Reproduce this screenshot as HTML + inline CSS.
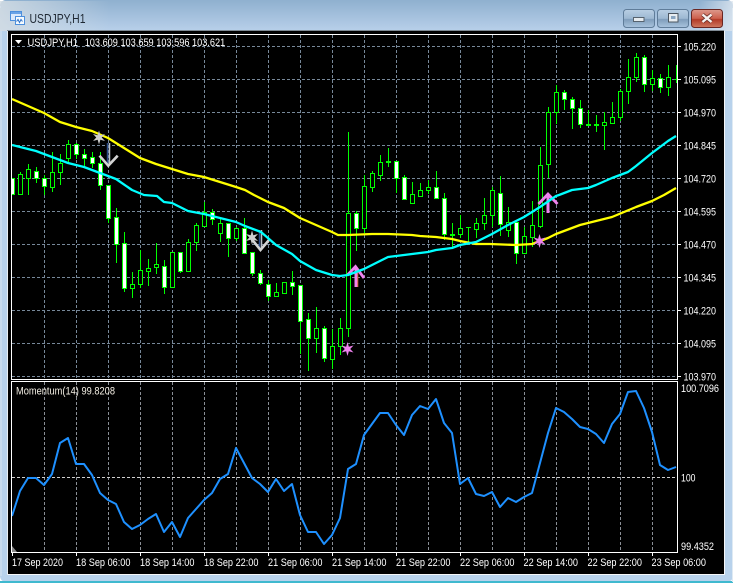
<!DOCTYPE html>
<html><head><meta charset="utf-8"><title>USDJPY,H1</title>
<style>html,body{margin:0;padding:0;background:#fff;width:735px;height:583px;overflow:hidden}svg{display:block}text{font-family:"Liberation Sans",sans-serif}</style></head>
<body>
<svg xmlns="http://www.w3.org/2000/svg" width="735" height="583" viewBox="0 0 735 583">
<defs>
<linearGradient id="tb" x1="0" y1="0" x2="0" y2="1"><stop offset="0" stop-color="#8fb0cf"/><stop offset="1" stop-color="#b8d0ea"/></linearGradient>
<linearGradient id="tl" x1="0" y1="0" x2="1" y2="0"><stop offset="0" stop-color="#d4dde4" stop-opacity=".85"/><stop offset="1" stop-color="#d4dde4" stop-opacity="0"/></linearGradient>
<linearGradient id="tr" x1="0" y1="0" x2="1" y2="0"><stop offset="0" stop-color="#e0e8f0" stop-opacity="0"/><stop offset="1" stop-color="#e0e8f0" stop-opacity=".8"/></linearGradient>
<linearGradient id="btn" x1="0" y1="0" x2="0" y2="1"><stop offset="0" stop-color="#b9cfe4"/><stop offset=".5" stop-color="#9db8d2"/><stop offset=".55" stop-color="#7f9dbb"/><stop offset="1" stop-color="#a9c4de"/></linearGradient>
<linearGradient id="cls" x1="0" y1="0" x2="0" y2="1"><stop offset="0" stop-color="#dd9a8d"/><stop offset=".5" stop-color="#cc5f4c"/><stop offset=".55" stop-color="#b23a27"/><stop offset="1" stop-color="#cf7a62"/></linearGradient>
<clipPath id="cm"><rect x="12" y="35" width="665" height="344"/></clipPath>
<clipPath id="ci"><rect x="12" y="382" width="665" height="170"/></clipPath>
</defs>

<rect x="0" y="0" width="733" height="582" rx="6" fill="#b8d2ec"/>
<path d="M6 0H727a6 6 0 0 1 6 6V31H0V6A6 6 0 0 1 6 0Z" fill="url(#tb)"/>
<rect x="0" y="1" width="110" height="30" fill="url(#tl)"/>
<rect x="700" y="1" width="33" height="30" fill="url(#tr)"/>
<path d="M0 6V8M1 31V576" stroke="#d8e4f0" stroke-width="1"/>
<rect x="0" y="581" width="733" height="2" fill="#3fb9cf"/>
<rect x="732" y="8" width="1" height="574" fill="#dfeaf3"/>

<!-- Title bar -->
<g shape-rendering="crispEdges">
<rect x="10.5" y="11.5" width="11" height="9" fill="#dbe9fb" stroke="#4d8fdc"/>
<rect x="15.5" y="16.5" width="9" height="8" fill="#f6fbff" stroke="#4d8fdc"/>
<rect x="11" y="12" width="10" height="2" fill="#6aa3e6"/>
</g>
<path d="M16.5 21.5l1.5-2 1.5 3 1.5-3 1.5 2" fill="none" stroke="#2f72c8" stroke-width="1"/>
<text x="29.5" y="23" font-size="12.5" fill="#1e2833" textLength="56" lengthAdjust="spacingAndGlyphs">USDJPY,H1</text>

<rect x="623.5" y="9.5" width="31" height="18" rx="3" fill="url(#btn)" stroke="#5f7c99"/>
<rect x="633.5" y="17.5" width="10.5" height="4" fill="#e6ebef" stroke="#57636f"/>
<rect x="657.5" y="9.5" width="31" height="18" rx="3" fill="url(#btn)" stroke="#5f7c99"/>
<rect x="668.5" y="13.5" width="9.5" height="8.5" fill="#e8edf1" stroke="#4c5661"/>
<rect x="671" y="16" width="4.5" height="3" fill="#8aa6c2"/>
<rect x="691.5" y="9.5" width="31" height="18" rx="3" fill="url(#cls)" stroke="#6a2622"/>
<path d="M702.5 14.5L711.5 22M711.5 14.5L702.5 22" stroke="#6d3028" stroke-width="4"/>
<path d="M702.5 14.5L711.5 22M711.5 14.5L702.5 22" stroke="#f6f3f1" stroke-width="2.4"/>

<!-- Client -->
<rect x="7" y="30" width="717" height="1" fill="#7f8a94"/>
<rect x="8" y="31" width="716" height="543" fill="#000"/>
<rect x="7" y="31" width="1" height="544" fill="#e8edf2"/>
<rect x="8" y="574" width="717" height="1" fill="#f4f6f8"/>
<rect x="724" y="31" width="1" height="544" fill="#f4f6f8"/>

<!-- Grid main -->
<g fill="none" stroke="#778899" stroke-width="1" stroke-dasharray="3 2" shape-rendering="crispEdges">
<path d="M12 46.5H677M12 79.5H677M12 112.5H677M12 145.5H677M12 178.5H677M12 211.5H677M12 244.5H677M12 277.5H677M12 310.5H677M12 343.5H677M12 376.5H677"/>
<path d="M44.5 35V379M76.5 35V379M108.5 35V379M140.5 35V379M172.5 35V379M204.5 35V379M236.5 35V379M268.5 35V379M300.5 35V379M332.5 35V379M364.5 35V379M396.5 35V379M428.5 35V379M460.5 35V379M492.5 35V379M524.5 35V379M556.5 35V379M588.5 35V379M620.5 35V379M652.5 35V379"/>
</g>
<!-- Grid indicator -->
<g fill="none" stroke-width="1" stroke-dasharray="3 2" shape-rendering="crispEdges">
<path stroke="#8a8f96" d="M44.5 382V552M76.5 382V552M108.5 382V552M140.5 382V552M172.5 382V552M204.5 382V552M236.5 382V552M268.5 382V552M300.5 382V552M332.5 382V552M364.5 382V552M396.5 382V552M428.5 382V552M460.5 382V552M492.5 382V552M524.5 382V552M556.5 382V552M588.5 382V552M620.5 382V552M652.5 382V552"/>
<path stroke="#d0d0d0" d="M12 477.5H677"/>
</g>

<!-- Candles -->
<g clip-path="url(#cm)" shape-rendering="crispEdges">
<path fill="none" stroke="#00ff00" stroke-width="1" d="M20.5 172V195M28.5 164V195M36.5 167V183M44.5 175V195M52.5 152V192M60.5 154V185M68.5 140V162M76.5 143V159M84.5 149V166M92.5 152V168M100.5 152V190M108.5 185V223M116.5 208V263M124.5 232V292M132.5 272V298M140.5 250V288M148.5 259V286M156.5 243V274M164.5 260V294M172.5 252V287M180.5 252V273M188.5 239V272M196.5 223V251M204.5 202V226M212.5 209V225M220.5 217V242M228.5 223V257M236.5 227V241M244.5 218V254M252.5 252V276M260.5 270V285M268.5 280V301M276.5 283V297M284.5 282V293M292.5 271V295M300.5 285V354M308.5 313V371M316.5 307V353M324.5 326V362M332.5 329V369M340.5 318V355M348.5 132V337M356.5 211V251M364.5 175V233M372.5 171V192M380.5 155V181M388.5 148V167M396.5 161V193M404.5 175V200M412.5 182V203M420.5 183V196M428.5 180V194M436.5 171V198M444.5 193V240M452.5 223V248M460.5 215V238M468.5 227V243M476.5 218V238M484.5 198V230M492.5 187V227M500.5 176V236M508.5 207V237M516.5 222V264M524.5 227V253M532.5 201V247M540.5 147V228M548.5 107V178M556.5 85V124M564.5 90V110M572.5 97V129M580.5 100V128M588.5 110V126M596.5 115V132M604.5 112V150M612.5 102V123M620.5 89V121M628.5 59V104M636.5 53V82M644.5 55V92M652.5 70V91M660.5 74V93M668.5 65V96M676.5 65V83"/>
<path fill="#000" stroke="#00ff00" stroke-width="1" d="M18.5 174.5h4v20h-4zM26.5 169.5h4v9h-4zM50.5 172.5h4v15h-4zM58.5 163.5h4v9h-4zM66.5 144.5h4v14h-4zM130.5 284.5h4v4h-4zM138.5 270.5h4v14h-4zM146.5 268.5h4v3h-4zM154.5 264.5h4v3h-4zM170.5 252.5h4v35h-4zM186.5 242.5h4v29h-4zM194.5 225.5h4v17h-4zM202.5 212.5h4v14h-4zM218.5 223.5h4v10h-4zM234.5 228.5h4v10h-4zM274.5 292.5h4v4h-4zM282.5 282.5h4v11h-4zM314.5 328.5h4v10h-4zM330.5 346.5h4v13h-4zM338.5 328.5h4v18h-4zM346.5 213.5h4v115h-4zM362.5 186.5h4v42h-4zM370.5 173.5h4v14h-4zM378.5 162.5h4v13h-4zM410.5 194.5h4v9h-4zM418.5 190.5h4v6h-4zM426.5 187.5h4v3h-4zM458.5 228.5h4v6h-4zM474.5 223.5h4v6h-4zM482.5 215.5h4v8h-4zM490.5 190.5h4v25h-4zM506.5 222.5h4v8h-4zM522.5 236.5h4v17h-4zM530.5 225.5h4v12h-4zM538.5 165.5h4v61h-4zM546.5 112.5h4v52h-4zM554.5 92.5h4v20h-4zM602.5 122.5h4v3h-4zM610.5 117.5h4v6h-4zM618.5 91.5h4v26h-4zM626.5 77.5h4v14h-4zM634.5 57.5h4v20h-4zM650.5 78.5h4v6h-4zM666.5 77.5h4v10h-4z"/>
<path fill="#fff" stroke="#00ff00" stroke-width="1" d="M10.5 178.5h4v16h-4zM34.5 171.5h4v7h-4zM42.5 178.5h4v8h-4zM74.5 144.5h4v10h-4zM82.5 154.5h4v4h-4zM90.5 157.5h4v6h-4zM98.5 163.5h4v22h-4zM106.5 185.5h4v33h-4zM114.5 217.5h4v27h-4zM122.5 243.5h4v45h-4zM162.5 266.5h4v21h-4zM178.5 252.5h4v19h-4zM210.5 212.5h4v7h-4zM226.5 223.5h4v15h-4zM242.5 228.5h4v25h-4zM250.5 252.5h4v21h-4zM258.5 273.5h4v10h-4zM266.5 284.5h4v12h-4zM290.5 282.5h4v4h-4zM298.5 285.5h4v36h-4zM306.5 319.5h4v19h-4zM322.5 328.5h4v30h-4zM354.5 213.5h4v15h-4zM394.5 161.5h4v17h-4zM402.5 177.5h4v22h-4zM434.5 187.5h4v11h-4zM442.5 198.5h4v36h-4zM498.5 193.5h4v31h-4zM514.5 222.5h4v31h-4zM562.5 92.5h4v7h-4zM570.5 99.5h4v9h-4zM578.5 108.5h4v16h-4zM642.5 57.5h4v27h-4zM658.5 78.5h4v9h-4z"/>
<path fill="#00ff00" d="M386 161h5v2h-5zM450 234h5v2h-5zM466 227h5v1h-5zM586 124h5v2h-5zM594 124h5v2h-5zM674 79h3v1h-3z"/>
</g>

<!-- Arrows under MA lines -->
<g clip-path="url(#cm)" fill="none">
<path d="M107.5 143V164" stroke="#2a4a86" stroke-width="1.5"/>
<path d="M109.5 143V164" stroke="#b9bfc6" stroke-width="1.5"/>
<path d="M99.5 155.7L108.3 165.7L117.7 155.7" stroke="#d4d4d4" stroke-width="2.6"/>
<path d="M259.5 230V249" stroke="#2a4a86" stroke-width="1.5"/>
<path d="M261.5 230V249" stroke="#b9bfc6" stroke-width="1.5"/>
<path d="M252.5 240L260.5 250L269 240" stroke="#d4d4d4" stroke-width="2.6"/>
<path d="M356 268V287" stroke="#ee82ee" stroke-width="3"/>
<path d="M357.8 270V287" stroke="#e0603a" stroke-width="1"/>
<path d="M347.5 275L355.5 266.5L364 278" stroke="#ee82ee" stroke-width="2.8"/>
<path d="M548 194V213" stroke="#ee82ee" stroke-width="3"/>
<path d="M538.5 204L548 194L557.5 204" stroke="#ee82ee" stroke-width="2.8"/>
</g>

<!-- MA lines -->
<g clip-path="url(#cm)" fill="none" stroke-width="2.3" stroke-linejoin="round">
<polyline stroke="#ffff00" points="12,99 28,106 44,113 60,122 76,127 92,131 108,138 124,148 140,158 156,164 172,169 188,174 204,177 220,182 236,187 245,190 254,195 268,202 284,208 300,218 316,225 332,232 338,235 348,235 372,234 380,234 388,234 412,235 420,236 436,237 452,239 460,241 476,244 490,244 516,245 532,244 548,238 556,234 580,225 588,223 612,217 636,207 652,201 664,195 676,188"/>
<polyline stroke="#00ffff" points="12,145 28,149 36,151 52,157 68,163 84,167 100,173 116,179 132,190 144,195 157,196 164,202 172,203 188,211 204,214 220,218 236,222 245,226 261,232 276,245 292,254 300,261 316,270 332,275 340,276 348,275 364,269 380,261 388,257 396,256 412,254 420,253 428,252 436,250 452,248 460,245 476,242 492,234 508,225 524,217 540,207 556,196 559,195 572,190 588,188 596,185 612,178 628,172 636,166 652,153 668,141 676,136"/>
</g>

<!-- Stars -->
<path transform="translate(99 137.5)" fill="#cfcfcf" d="M0-7L1.35-2.3L6-3.5L2.7 0L6 3.5L1.35 2.3L0 7L-1.35 2.3L-6 3.5L-2.7 0L-6-3.5L-1.35-2.3Z"/>
<path transform="translate(252 237.5)" fill="#cfcfcf" d="M0-7L1.35-2.3L6-3.5L2.7 0L6 3.5L1.35 2.3L0 7L-1.35 2.3L-6 3.5L-2.7 0L-6-3.5L-1.35-2.3Z"/>
<path transform="translate(347.5 349)" fill="#ee82ee" d="M0-7L1.35-2.3L6-3.5L2.7 0L6 3.5L1.35 2.3L0 7L-1.35 2.3L-6 3.5L-2.7 0L-6-3.5L-1.35-2.3Z"/>
<path transform="translate(539.5 241)" fill="#ee82ee" d="M0-7L1.35-2.3L6-3.5L2.7 0L6 3.5L1.35 2.3L0 7L-1.35 2.3L-6 3.5L-2.7 0L-6-3.5L-1.35-2.3Z"/>

<!-- Momentum -->
<polyline clip-path="url(#ci)" fill="none" stroke="#1e90ff" stroke-width="2" stroke-linejoin="round" points="12,516 20,491 28,478 36,478 44,485 52,474 60,443 68,438 76,464 84,464 92,475 100,493 108,500 116,504 124,522 132,529 140,525 148,519 156,514 164,532 172,522 180,537 188,518 196,509 204,500 212,493 220,479 228,474 236,448 244,463 252,478 260,484 268,492 276,479 284,491 292,484 300,515 308,532 316,532 324,544 332,535 340,518 348,469 356,464 364,435 372,424 380,413 388,413 396,425 404,435 412,415 420,406 428,409 436,399 444,423 452,433 460,484 468,478 476,494 484,496 492,492 500,507 508,498 516,502 524,497 532,493 540,463 548,433 556,408 564,412 572,419 580,427 588,429 596,434 604,443 612,424 620,414 628,392 636,391 644,408 652,432 660,465 668,470 676,467"/>
<polygon points="12,546 17,552 12,552" fill="#8a8a8a"/>

<!-- Frames and ticks -->
<g fill="none" stroke="#fff" stroke-width="1" shape-rendering="crispEdges">
<path d="M11.5 34.5H677.5V379.5H11.5Z"/>
<path d="M11.5 381.5H677.5V552.5H11.5Z"/>
<path d="M678 46.5h3M678 79.5h3M678 112.5h3M678 145.5h3M678 178.5h3M678 211.5h3M678 244.5h3M678 277.5h3M678 310.5h3M678 343.5h3M678 376.5h3"/>
<path d="M12.5 553v3M76.5 553v3M140.5 553v3M204.5 553v3M268.5 553v3M332.5 553v3M396.5 553v3M460.5 553v3M524.5 553v3M588.5 553v3M652.5 553v3"/>
</g>

<!-- Header -->
<polygon points="15,40 22,40 18.5,44" fill="#fff"/>
<g fill="#fff" font-size="11">
<text x="27.5" y="46" textLength="50.5" lengthAdjust="spacingAndGlyphs">USDJPY,H1</text>
<text x="84.7" y="46" textLength="140.5" lengthAdjust="spacingAndGlyphs">103.609 103.659 103.596 103.621</text>
<text x="16" y="394.5" textLength="99" lengthAdjust="spacingAndGlyphs" fill="#f4efe4">Momentum(14) 99.8208</text>

<text x="683.5" y="50.5" textLength="32.5" lengthAdjust="spacingAndGlyphs">105.220</text>
<text x="683.5" y="83.5" textLength="32.5" lengthAdjust="spacingAndGlyphs">105.095</text>
<text x="683.5" y="116.5" textLength="32.5" lengthAdjust="spacingAndGlyphs">104.970</text>
<text x="683.5" y="149.5" textLength="32.5" lengthAdjust="spacingAndGlyphs">104.845</text>
<text x="683.5" y="182.5" textLength="32.5" lengthAdjust="spacingAndGlyphs">104.720</text>
<text x="683.5" y="215.5" textLength="32.5" lengthAdjust="spacingAndGlyphs">104.595</text>
<text x="683.5" y="248.5" textLength="32.5" lengthAdjust="spacingAndGlyphs">104.470</text>
<text x="683.5" y="281.5" textLength="32.5" lengthAdjust="spacingAndGlyphs">104.345</text>
<text x="683.5" y="314.5" textLength="32.5" lengthAdjust="spacingAndGlyphs">104.220</text>
<text x="683.5" y="347.5" textLength="32.5" lengthAdjust="spacingAndGlyphs">104.095</text>
<text x="683.5" y="380.5" textLength="32.5" lengthAdjust="spacingAndGlyphs">103.970</text>

<text x="681" y="392" textLength="38" lengthAdjust="spacingAndGlyphs">100.7096</text>
<text x="681" y="481.5" textLength="14.5" lengthAdjust="spacingAndGlyphs">100</text>
<text x="681" y="550" textLength="33" lengthAdjust="spacingAndGlyphs">99.4352</text>

<text x="12" y="566" textLength="51" lengthAdjust="spacingAndGlyphs">17 Sep 2020</text>
<text x="76" y="566" textLength="54.5" lengthAdjust="spacingAndGlyphs">18 Sep 06:00</text>
<text x="140" y="566" textLength="54.5" lengthAdjust="spacingAndGlyphs">18 Sep 14:00</text>
<text x="204" y="566" textLength="54.5" lengthAdjust="spacingAndGlyphs">18 Sep 22:00</text>
<text x="268" y="566" textLength="54.5" lengthAdjust="spacingAndGlyphs">21 Sep 06:00</text>
<text x="332" y="566" textLength="54.5" lengthAdjust="spacingAndGlyphs">21 Sep 14:00</text>
<text x="396" y="566" textLength="54.5" lengthAdjust="spacingAndGlyphs">21 Sep 22:00</text>
<text x="460" y="566" textLength="54.5" lengthAdjust="spacingAndGlyphs">22 Sep 06:00</text>
<text x="523.5" y="566" textLength="54.5" lengthAdjust="spacingAndGlyphs">22 Sep 14:00</text>
<text x="587.5" y="566" textLength="54.5" lengthAdjust="spacingAndGlyphs">22 Sep 22:00</text>
<text x="651.5" y="566" textLength="54.5" lengthAdjust="spacingAndGlyphs">23 Sep 06:00</text>
</g>
</svg>
</body></html>
